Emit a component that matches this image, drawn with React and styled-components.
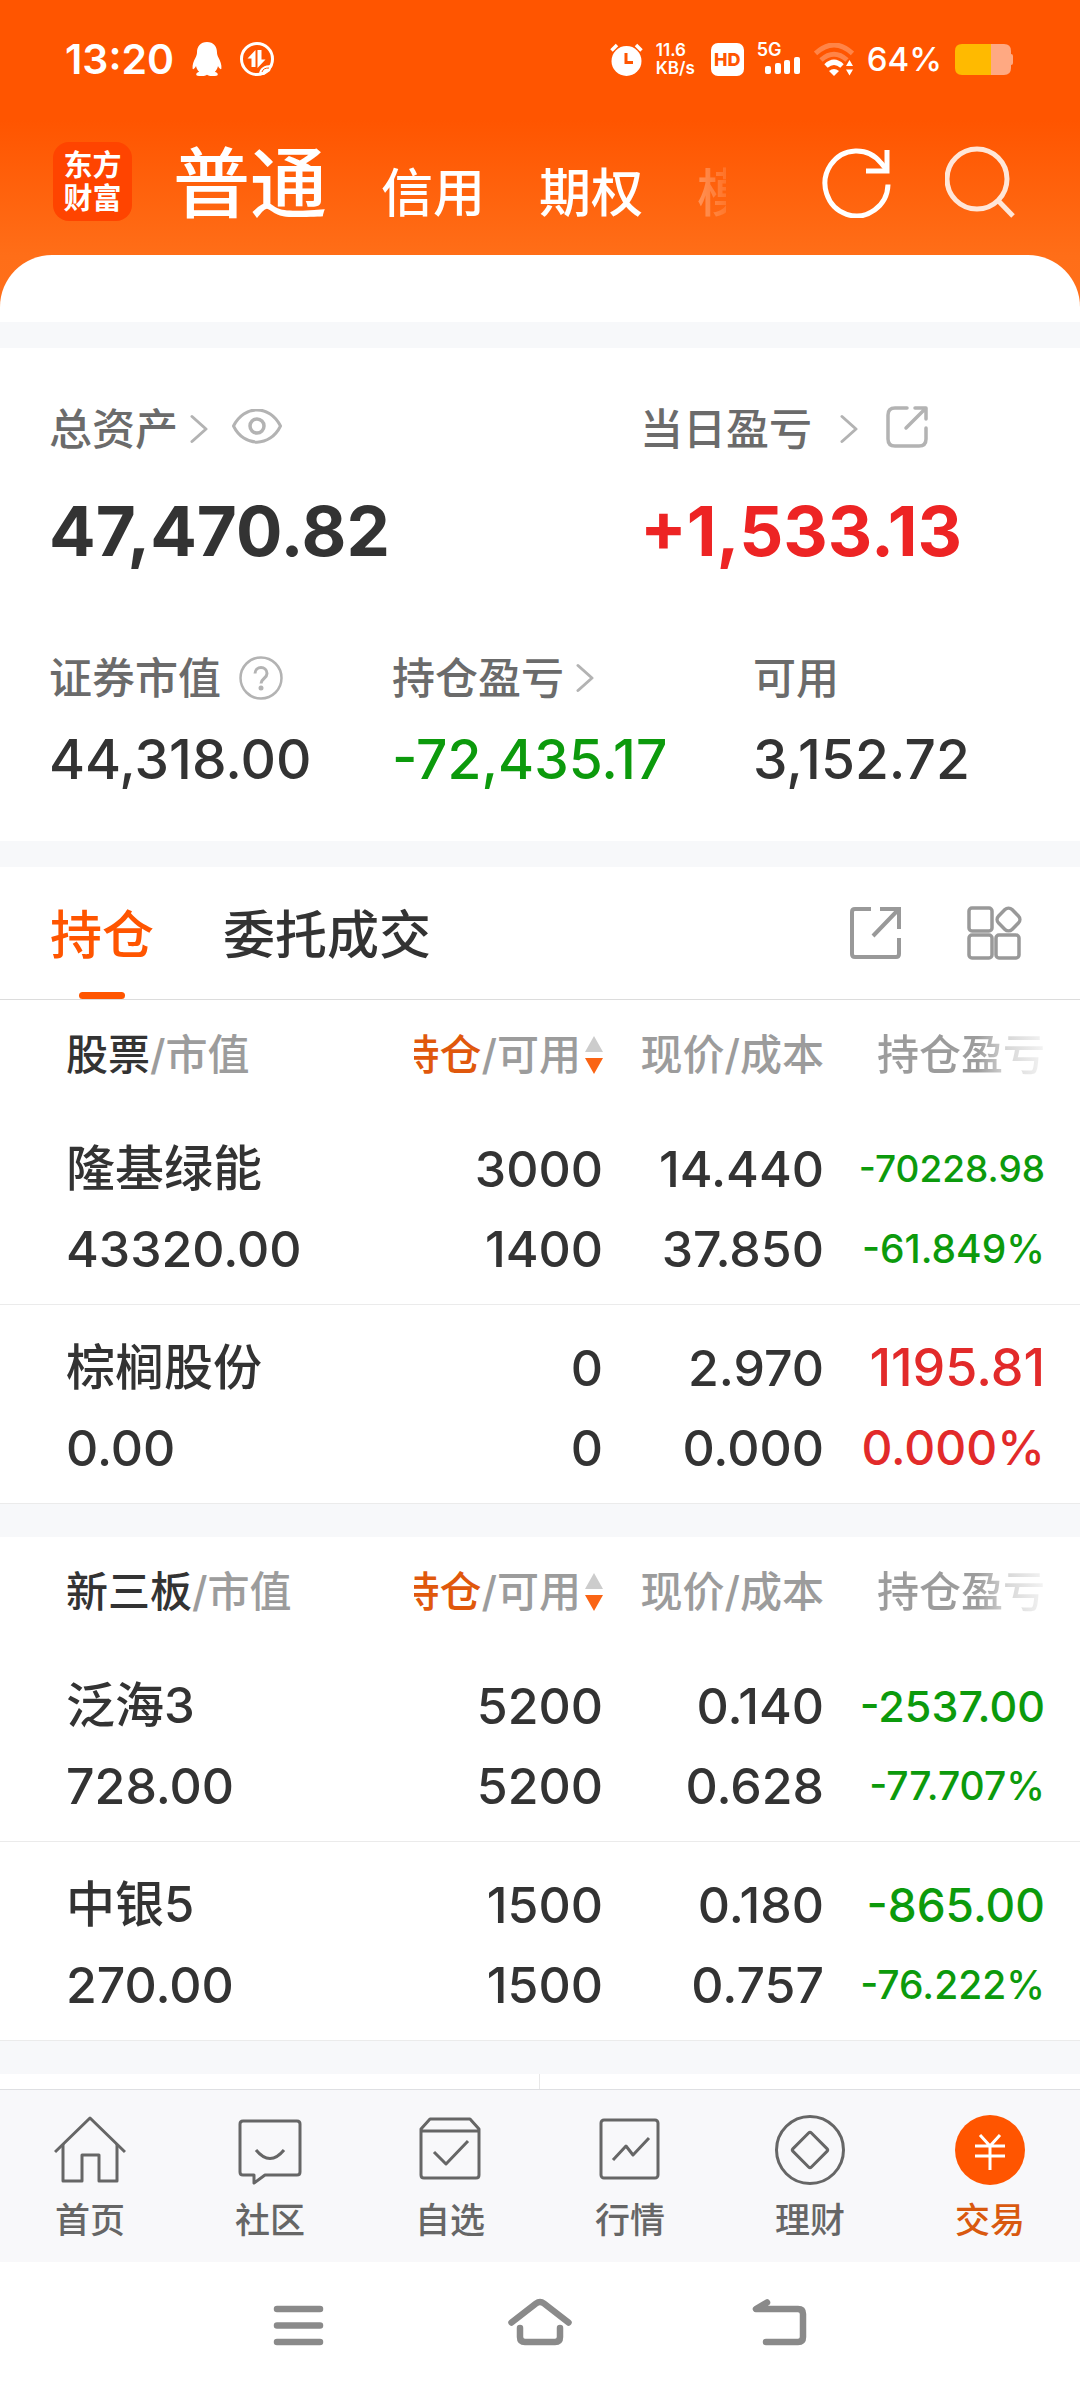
import React from "react";
import styled, { createGlobalStyle } from "styled-components";

const FONT = `Inter, "Noto Sans CJK SC", sans-serif`;
const ORANGE = "#ff5500";
const INK = "#333333";
const GREEN = "#0c9a0c";
const RED = "#e22a2a";

const Global = createGlobalStyle`
  * { box-sizing: border-box; }
  body { margin: 0; background: #fff; color: ${INK}; font-family: ${FONT}; }
  button { border: 0; padding: 0; background: none; font: inherit; color: inherit; cursor: pointer; }
  svg { display: block; flex: none; }
`;

const Page = styled.div`
  display: flex;
  flex-direction: column;
  min-height: 100vh;
`;

/* ---------- header ---------- */
const Header = styled.header`
  background: linear-gradient(#ff5500 0, #ff5500 120px, #ff6e18 256px, #ff701c 100%);
`;
const StatusBar = styled.div`
  display: flex;
  align-items: center;
  justify-content: space-between;
  height: 118px;
  padding: 0 67px 0 65px;
  color: #fff;
`;
const StatusGroup = styled.div`
  display: flex;
  align-items: center;
  gap: ${(p) => p.$gap}px;
`;
const Clock = styled.span`
  font-size: 41px;
  line-height: 42px;
  font-weight: 600;
`;
const NetSpeed = styled.span`
  display: flex;
  flex-direction: column;
  width: 42px;
  font-weight: 600;
`;
const NetLine = styled.span`
  font-size: 17px;
  line-height: 18px;
`;
const HdBadge = styled.span`
  display: flex;
  align-items: center;
  justify-content: center;
  width: 33px;
  height: 33px;
  border-radius: 7px;
  background: #fff;
  color: ${ORANGE};
  font-size: 18px;
  font-weight: 800;
`;
const Signal = styled.span`
  display: flex;
  flex-direction: column;
  width: 44px;
  height: 32px;
`;
const SignalLabel = styled.span`
  font-size: 18px;
  line-height: 14px;
  height: 14px;
  font-weight: 600;
`;
const Bars = styled.svg`
  align-self: flex-end;
`;
const Percent = styled.span`
  font-size: 33px;
  line-height: 34px;
  font-weight: 500;
`;
const TitleBar = styled.div`
  display: flex;
  align-items: center;
  height: 137px;
  padding: 0 65px 10px 53px;
`;
const Logo = styled.div`
  display: flex;
  flex-direction: column;
  justify-content: center;
  align-items: center;
  width: 79px;
  height: 79px;
  border-radius: 16px;
  background: #ff4400;
  color: #fff;
  font-size: 29px;
  line-height: 33px;
  font-weight: 700;
`;
const AccountTabs = styled.nav`
  flex: 1;
  display: flex;
  align-items: baseline;
  gap: 54px;
  margin: 0 96px 0 41px;
  padding-top: 14px;
  overflow: hidden;
  white-space: nowrap;
  color: #fff;
  mask-image: linear-gradient(to right, #000 calc(100% - 80px), rgba(0, 0, 0, 0.3) calc(100% - 28px), rgba(0, 0, 0, 0.12) 100%);
`;
const AccountTab = styled.button`
  flex: none;
  font-size: ${(p) => (p.$active ? 77 : 52)}px;
  line-height: 112px;
  font-weight: 500;
`;
const HeaderActions = styled.div`
  display: flex;
  gap: 53px;
`;
const SheetTop = styled.div`
  height: 67px;
  border-radius: 52px 52px 0 0;
  background: #fff;
`;

const Band = styled.div`
  height: ${(p) => p.$size}px;
  background: #f7f8fa;
`;

/* ---------- assets ---------- */
const Assets = styled.section`
  padding: 51px 51px 52px 49px;
`;
const AssetRow = styled.div`
  display: grid;
  grid-template-columns: ${(p) => p.$cols};
  margin-top: ${(p) => p.$top}px;
`;
const AssetLabel = styled.div`
  display: flex;
  align-items: center;
  gap: ${(p) => p.$gap}px;
  height: 60px;
  font-size: 43px;
  line-height: 60px;
  font-weight: 500;
  color: #6b6b6b;
`;
const AssetValue = styled.div`
  margin-top: ${(p) => (p.$large ? 32 : 21)}px;
  font-size: ${(p) => (p.$large ? 69 : 55)}px;
  line-height: ${(p) => (p.$large ? 80 : 60)}px;
  font-weight: ${(p) => (p.$large ? 700 : 550)};
  color: ${(p) => p.$color || INK};
`;

/* ---------- holdings ---------- */
const TabBar = styled.div`
  display: flex;
  align-items: stretch;
  height: 133px;
  padding: 0 57px 0 50px;
  border-bottom: 1px solid #dcdcdc;
`;
const Tab = styled.button`
  display: flex;
  flex-direction: column;
  align-items: center;
  justify-content: flex-end;
  margin-right: 69px;
  font-size: 52px;
  line-height: 60px;
  font-weight: 500;
  color: ${(p) => (p.$active ? ORANGE : INK)};
  &::after {
    content: "";
    width: 46px;
    height: 7px;
    margin-top: 26px;
    border-radius: 4px;
    background: ${(p) => (p.$active ? ORANGE : "transparent")};
  }
`;
const TabTools = styled.div`
  display: flex;
  align-items: center;
  gap: 66px;
  margin-left: auto;
`;
const Table = styled.table`
  width: 100%;
  table-layout: fixed;
  border-spacing: 0;
`;
const Th = styled.th`
  width: ${(p) => p.$width || "auto"};
  height: 106px;
  padding: 4px ${(p) => p.$end || 0}px 0 ${(p) => p.$start || 0}px;
  font-size: 42px;
  line-height: 60px;
  font-weight: 500;
  text-align: ${(p) => (p.$start ? "left" : "right")};
  white-space: nowrap;
  color: #9c9c9c;
`;
const Strong = styled.span`
  color: ${(p) => p.$color || INK};
`;
const SortHead = styled.button`
  display: flex;
  align-items: center;
  justify-content: flex-end;
  gap: 4px;
  width: 100%;
  overflow: hidden;
`;
const FadeText = styled.span`
  color: transparent;
  background: linear-gradient(to right, #9c9c9c 60%, #d8d8d8 78%, #f4f4f4 100%);
  background-clip: text;
`;
const Td = styled.td`
  padding: 23px ${(p) => p.$end || 0}px 15px ${(p) => p.$start || 0}px;
  border-bottom: 1px solid #ebebeb;
  text-align: ${(p) => (p.$start ? "left" : "right")};
  color: ${(p) => p.$color || INK};
  white-space: nowrap;
`;
const Line = styled.div`
  height: 80px;
  line-height: 80px;
  font-size: ${(p) => p.$size}px;
  font-weight: 550;
`;
const NextPanel = styled.div`
  display: grid;
  grid-template-columns: 1fr 1fr;
  height: 15px;
`;
const NextCell = styled.div`
  border-right: ${(p) => (p.$divided ? "1px solid #e8e8e8" : "0")};
`;

/* ---------- bottom ---------- */
const BottomNav = styled.nav`
  display: grid;
  grid-template-columns: repeat(6, 1fr);
  height: 173px;
  border-top: 1px solid #dedfe2;
  background: #f8f8fa;
`;
const NavItem = styled.a`
  display: flex;
  flex-direction: column;
  align-items: center;
  padding-top: 24px;
  gap: 12px;
  font-size: 35px;
  line-height: 44px;
  font-weight: 500;
  text-decoration: none;
  color: ${(p) => (p.$active ? "#d9590f" : "#666")};
`;
const SystemNav = styled.div`
  display: flex;
  justify-content: center;
  align-items: center;
  gap: 177px;
  flex: 1;
  min-height: 126px;
  padding-bottom: 6px;
`;

/* ---------- icons ---------- */
const stroke = (color, width) => ({ fill: "none", stroke: color, strokeWidth: width });

const Penguin = () => (
  <svg width="30" height="34" viewBox="0 0 30 34" fill="#fff">
    <path d="M15 0C8.500 0 5 4.500 5 10.500c0 2-.6 3-1.400 5C1.600 19 .2 23 .6 26.500c.2 1.200 1.200.7 2.100-.4.600-.8 1.100-1.600 1.300-2.100.5 2.400 1.600 4.400 3.200 5.800-1.600.6-3 1.400-3 2.600 0 1.100 1.600 1.600 5.400 1.600 2.600 0 4.400-.4 5.400-1.200 1 .8 2.800 1.200 5.400 1.200 3.800 0 5.400-.5 5.400-1.600 0-1.200-1.400-2-3-2.600 1.600-1.400 2.700-3.400 3.200-5.800.2.500.7 1.300 1.300 2.100.9 1.100 1.900 1.600 2.100.4.400-3.500-1-7.500-3-11-.8-2-1.400-3-1.400-5C25 4.500 21.500 0 15 0z" />
  </svg>
);
const FlowIcon = () => (
  <svg width="34" height="34" viewBox="0 0 34 34">
    <circle cx="17" cy="17" r="15.500" {...stroke("#fff", 3)} />
    <path d="M15.500 25V8l-8 8.500h4V25zM17.500 8v18l8-8.500h-4V8z" fill="#fff" />
    <path d="M19 33c0-7 5-10 13-10l-2 6-6 4z" fill="#fff" />
    <path d="M22 30c1-3 3-4 7-4" {...stroke(ORANGE, 1)} />
  </svg>
);
const Alarm = () => (
  <svg width="33" height="33" viewBox="0 0 33 33">
    <circle cx="16.500" cy="18" r="15" fill="#fff" />
    <path d="M1.500 7.500 7 2M31.500 7.500 26 2" {...stroke("#fff", 3.500)} />
    <path d="M16 10v9.500h7" {...stroke(ORANGE, 3)} />
  </svg>
);
const SignalBars = () => (
  <Bars width="36" height="17" viewBox="0 0 36 17" fill="#fff">
    <rect x="0" y="9" width="6" height="8" rx="2" />
    <rect x="10" y="6" width="6" height="11" rx="2" />
    <rect x="19" y="3" width="6" height="14" rx="2" />
    <rect x="29" y="0" width="6" height="17" rx="2" />
  </Bars>
);
const Wifi = () => (
  <svg width="40" height="33" viewBox="0 0 40 33">
    <path d="M1.500 10.500Q20-6.500 38.500 10.500" {...stroke("#fff", 5)} opacity=".28" />
    <path d="M7 17Q20 5.500 33 17" {...stroke("#fff", 5)} opacity=".28" />
    <path d="M12 23Q20 15.500 28 23" {...stroke("#fff", 5)} />
    <path d="M15 28q5-4 10 0l-5 5z" fill="#fff" />
    <path d="M32 23l3.500-6 3.500 6zM32 26.500l3.500 6 3.500-6z" fill="#fff" />
  </svg>
);
const Battery = () => (
  <svg width="58" height="31" viewBox="0 0 58 31">
    <path d="M7 0h29v31H7q-7 0-7-7V7q0-7 7-7z" fill="#ffba00" />
    <path d="M36 0h13q7 0 7 7v3q2 0 2 2v7q0 2-2 2v3q0 7-7 7H36z" fill="#ffa982" />
  </svg>
);
const Refresh = () => (
  <svg width="70" height="72" viewBox="0 0 70 72">
    <path d="M66 38.500A31.500 32.500 0 1 1 59 17l6 7" {...stroke("#fff", 5)} />
    <path d="M65 4v21H44" {...stroke("#fff", 5)} />
  </svg>
);
const Search = () => (
  <svg width="70" height="72" viewBox="0 0 70 72">
    <circle cx="32" cy="33" r="30" {...stroke("#ffe6d8", 5)} />
    <path d="M53 54.500 68 70" {...stroke("#ffe6d8", 5)} />
  </svg>
);
const Chevron = () => (
  <svg width="18" height="30" viewBox="0 0 18 30">
    <path d="M2 2.500 16 15 2 27.500" {...stroke("#b3b3b3", 3)} strokeLinecap="round" strokeLinejoin="round" />
  </svg>
);
const Eye = () => (
  <svg width="50" height="40" viewBox="0 0 50 40">
    <path d="M1.500 17C12-4.500 38-4.500 48.500 17 38 38.500 12 38.500 1.500 17z" {...stroke("#b3b3b3", 3)} strokeLinejoin="round" />
    <circle cx="25" cy="17" r="7" {...stroke("#b3b3b3", 3.500)} />
  </svg>
);
const Help = () => (
  <svg width="44" height="44" viewBox="0 0 44 44">
    <circle cx="22" cy="22" r="20.500" {...stroke("#b3b3b3", 2.500)} />
    <path d="M16 17.500c0-8 12-8 12 0 0 5-6 5-6 10" {...stroke("#b3b3b3", 3)} />
    <circle cx="22" cy="32" r="2.500" fill="#b3b3b3" />
  </svg>
);
const ShareSmall = () => (
  <svg width="42" height="46" viewBox="0 0 42 46" {...stroke("#b3b3b3", 3.500)} strokeLinecap="round" strokeLinejoin="round">
    <path d="M21 2H9Q2 2 2 9v24q0 7 7 7h24q7 0 7-7V22" />
    <path d="M29 2h11v11M39 3 20 22" />
  </svg>
);
const Share = () => (
  <svg width="51" height="52" viewBox="0 0 51 52" {...stroke("#999", 4)}>
    <path d="M21 2H5Q2 2 2 5v42q0 3 3 3h41q3 0 3-3V31" />
    <path d="M30 2h19v20M48 3 23 29" />
  </svg>
);
const GridIcon = () => (
  <svg width="56" height="54" viewBox="0 0 56 54" {...stroke("#999", 3.500)}>
    <rect x="2" y="2" width="23" height="23" rx="3" />
    <rect x="2" y="29" width="23" height="23" rx="3" />
    <rect x="29" y="29" width="23" height="23" rx="3" />
    <rect x="32" y="4" width="19" height="19" rx="5" transform="rotate(45 41.500 13.500)" />
  </svg>
);
const SortIcon = () => (
  <svg width="18" height="38" viewBox="0 0 18 38">
    <path d="M9 0l9 16H0z" fill="#ccc" />
    <path d="M0 22h18l-9 16z" fill="#fa6414" />
  </svg>
);

const navStroke = { ...stroke("#666", 3), strokeLinejoin: "round" };
const NAV = [
  {
    label: "首页",
    icon: (
      <g {...navStroke}>
        <path d="M1 38 36 4l35 34" />
        <path d="M9 30v37h19V41h17v26h18V30" />
      </g>
    ),
  },
  {
    label: "社区",
    icon: (
      <g {...navStroke}>
        <path d="M9 7h54q3 0 3 3v48q0 3-3 3H31L20 69v-8H9q-3 0-3-3V10q0-3 3-3z" />
        <path d="M22 36q14 17 28 0" />
      </g>
    ),
  },
  {
    label: "自选",
    icon: (
      <g {...navStroke}>
        <path d="M7 15v46q0 3 3 3h52q3 0 3-3V15l-9-10H16zM7 17h58" />
        <path d="M20 38l12 12 22-23" />
      </g>
    ),
  },
  {
    label: "行情",
    icon: (
      <g {...navStroke}>
        <rect x="7" y="6" width="57" height="58" rx="3" />
        <path d="M19 46l13-14 7 9 16-17" />
      </g>
    ),
  },
  {
    label: "理财",
    icon: (
      <g {...navStroke}>
        <circle cx="36" cy="36" r="33.500" />
        <rect x="23" y="23" width="26" height="26" rx="2" transform="rotate(45 36 36)" />
      </g>
    ),
  },
  {
    label: "交易",
    active: true,
    icon: (
      <g>
        <circle cx="36" cy="36" r="35" fill={ORANGE} />
        <path d="M26 21l10 11 10-11M36 32v24M21 32h30M21 42h30" {...stroke("#fff", 3)} />
      </g>
    ),
  },
];

const SECTIONS = [
  {
    title: "股票",
    rows: [
      { name: "隆基绿能", value: "43320.00", held: "3000", free: "1400", price: "14.440", cost: "37.850", pl: "-70228.98", plSize: 37, pct: "-61.849%", pctSize: 39, color: GREEN },
      { name: "棕榈股份", value: "0.00", held: "0", free: "0", price: "2.970", cost: "0.000", pl: "1195.81", plSize: 52, pct: "0.000%", pctSize: 48, color: RED },
    ],
  },
  {
    title: "新三板",
    rows: [
      { name: "泛海3", value: "728.00", held: "5200", free: "5200", price: "0.140", cost: "0.628", pl: "-2537.00", plSize: 43, pct: "-77.707%", pctSize: 39, color: GREEN },
      { name: "中银5", value: "270.00", held: "1500", free: "1500", price: "0.180", cost: "0.757", pl: "-865.00", plSize: 46, pct: "-76.222%", pctSize: 39, color: GREEN },
    ],
  },
];

function Holdings({ title, rows }) {
  return (
    <Table>
      <thead>
        <tr>
          <Th scope="col" $start={66}><Strong>{title}</Strong>/市值</Th>
          <Th scope="col" $width="189px">
            <SortHead type="button">
              <span><Strong $color="#e0580c">持仓</Strong>/可用</span>
              <SortIcon />
            </SortHead>
          </Th>
          <Th scope="col" $width="221px">现价/成本</Th>
          <Th scope="col" $width="256px" $end={35}><FadeText>持仓盈亏</FadeText></Th>
        </tr>
      </thead>
      <tbody>
        {rows.map((r) => (
          <tr key={r.name}>
            <Td $start={66}><Line $size={49}>{r.name}</Line><Line $size={50}>{r.value}</Line></Td>
            <Td><Line $size={50}>{r.held}</Line><Line $size={50}>{r.free}</Line></Td>
            <Td><Line $size={50}>{r.price}</Line><Line $size={50}>{r.cost}</Line></Td>
            <Td $end={35} $color={r.color}><Line $size={r.plSize}>{r.pl}</Line><Line $size={r.pctSize}>{r.pct}</Line></Td>
          </tr>
        ))}
      </tbody>
    </Table>
  );
}

export default function App() {
  return (
    <Page>
      <Global />
      <Header>
        <StatusBar>
          <StatusGroup $gap={18}>
            <Clock>13:20</Clock>
            <Penguin />
            <FlowIcon />
          </StatusGroup>
          <StatusGroup $gap={13}>
            <Alarm />
            <NetSpeed><NetLine>11.6</NetLine><NetLine>KB/s</NetLine></NetSpeed>
            <HdBadge>HD</HdBadge>
            <Signal><SignalLabel>5G</SignalLabel><SignalBars /></Signal>
            <Wifi />
            <Percent>64%</Percent>
            <Battery />
          </StatusGroup>
        </StatusBar>
        <TitleBar>
          <Logo><span>东方</span><span>财富</span></Logo>
          <AccountTabs>
            <AccountTab type="button" $active>普通</AccountTab>
            <AccountTab type="button">信用</AccountTab>
            <AccountTab type="button">期权</AccountTab>
            <AccountTab type="button">模拟</AccountTab>
          </AccountTabs>
          <HeaderActions>
            <button type="button" aria-label="刷新"><Refresh /></button>
            <button type="button" aria-label="搜索"><Search /></button>
          </HeaderActions>
        </TitleBar>
        <SheetTop />
      </Header>
      <Band $size={26} />
      <Assets>
        <AssetRow $cols="591fr 389fr" $top={0}>
          <div>
            <AssetLabel $gap={12}>总资产<Chevron /><span /><Eye /></AssetLabel>
            <AssetValue $large>47,470.82</AssetValue>
          </div>
          <div>
            <AssetLabel $gap={28}>当日盈亏<Chevron /><ShareSmall /></AssetLabel>
            <AssetValue $large $color="#ed2424">+1,533.13</AssetValue>
          </div>
        </AssetRow>
        <AssetRow $cols="343fr 361fr 276fr" $top={77}>
          <div>
            <AssetLabel $gap={18}>证券市值<Help /></AssetLabel>
            <AssetValue>44,318.00</AssetValue>
          </div>
          <div>
            <AssetLabel $gap={12}>持仓盈亏<Chevron /></AssetLabel>
            <AssetValue $color={GREEN}>-72,435.17</AssetValue>
          </div>
          <div>
            <AssetLabel $gap={12}>可用</AssetLabel>
            <AssetValue>3,152.72</AssetValue>
          </div>
        </AssetRow>
      </Assets>
      <Band $size={26} />
      <TabBar>
        <Tab type="button" $active>持仓</Tab>
        <Tab type="button">委托成交</Tab>
        <TabTools>
          <button type="button" aria-label="分享"><Share /></button>
          <button type="button" aria-label="更多"><GridIcon /></button>
        </TabTools>
      </TabBar>
      <Holdings {...SECTIONS[0]} />
      <Band $size={33} />
      <Holdings {...SECTIONS[1]} />
      <Band $size={33} />
      <NextPanel><NextCell $divided /><NextCell /></NextPanel>
      <BottomNav>
        {NAV.map((n) => (
          <NavItem key={n.label} href="#" $active={n.active}>
            <svg width="72" height="72" viewBox="0 0 72 72">{n.icon}</svg>
            {n.label}
          </NavItem>
        ))}
      </BottomNav>
      <SystemNav>
        <button type="button" aria-label="菜单">
          <svg width="64" height="48" viewBox="0 0 64 48" {...stroke("#8a8a8a", 6.500)} strokeLinecap="round">
            <path d="M10 11h43M10 27.500h43M10 44h43" />
          </svg>
        </button>
        <button type="button" aria-label="主屏幕">
          <svg width="64" height="48" viewBox="0 0 64 48" {...stroke("#8a8a8a", 6.500)} strokeLinecap="round" strokeLinejoin="round">
            <path d="M3.500 24.500 28 5.500q4-3 8 0l24.500 19" />
            <path d="M12 30v9q0 5 5 5h30q5 0 5-5v-9" />
          </svg>
        </button>
        <button type="button" aria-label="返回">
          <svg width="64" height="48" viewBox="0 0 64 48" {...stroke("#8a8a8a", 6.500)} strokeLinecap="round" strokeLinejoin="round">
            <path d="M18 4.500 7 11h42q5 0 5 5v23q0 5-5 5H17" />
          </svg>
        </button>
      </SystemNav>
    </Page>
  );
}
